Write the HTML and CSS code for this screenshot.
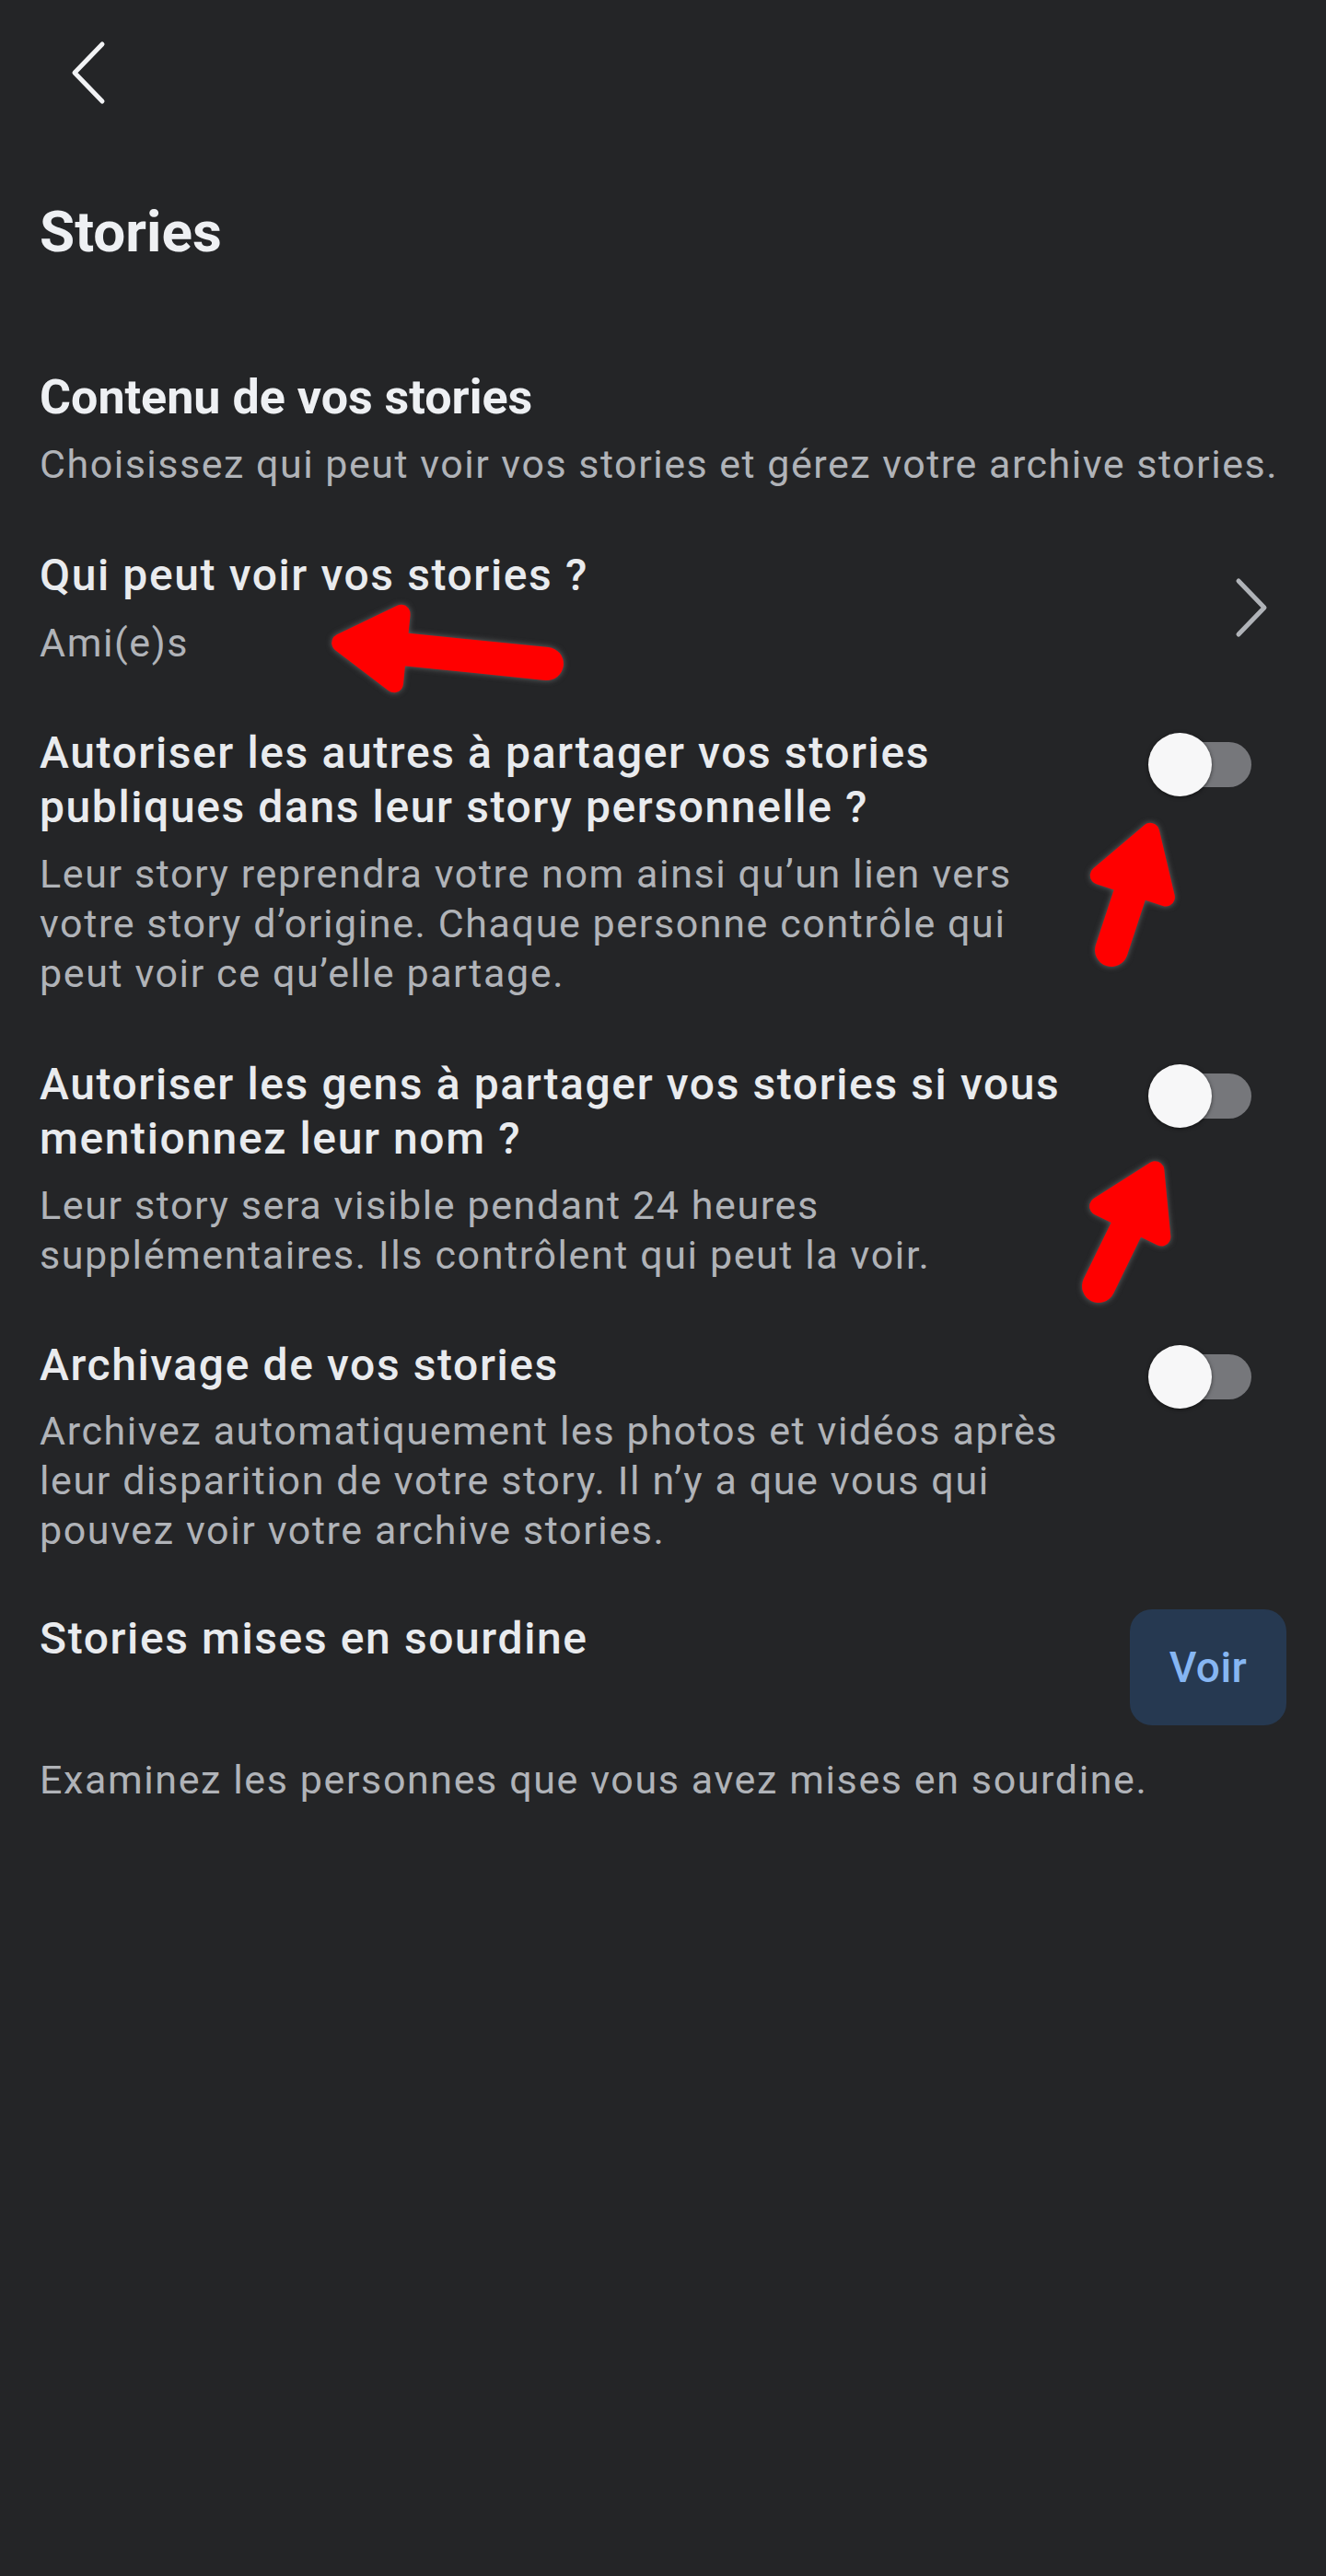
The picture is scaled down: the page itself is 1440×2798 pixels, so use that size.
FILE: index.html
```html
<!DOCTYPE html>
<html lang="fr">
<head>
<meta charset="utf-8">
<title>Stories</title>
<link rel="stylesheet" href="styles.css">
</head>
<body>
<div class="page">
  <header class="topbar">
    <svg class="back" viewBox="0 0 40 70" width="40" height="70" aria-label="Retour"><path d="M35 4 L5 35 L35 66"/></svg>
  </header>

  <h1 class="title">Stories</h1>

  <section class="section">
    <h2 class="section-title">Contenu de vos stories</h2>
    <p class="section-sub">Choisissez qui peut voir vos stories et gérez votre archive stories.</p>
  </section>

  <div class="row row-link">
    <div class="text">
      <div class="item-title">Qui peut voir vos stories ?</div>
      <div class="item-value">Ami(e)s</div>
    </div>
    <svg class="chev" viewBox="0 0 40 66" width="40" height="66"><path d="M6 4 L34 33 L6 62"/></svg>
  </div>

  <div class="row row-toggle row-first">
    <div class="text">
      <div class="item-title">Autoriser les autres à partager vos stories publiques dans leur story personnelle ?</div>
      <div class="item-desc">Leur story reprendra votre nom ainsi qu’un lien vers votre story d’origine. Chaque personne contrôle qui peut voir ce qu’elle partage.</div>
    </div>
    <div class="switch-wrap"><span class="switch"><span class="knob"></span></span></div>
  </div>

  <div class="row row-toggle">
    <div class="text">
      <div class="item-title">Autoriser les gens à partager vos stories si vous mentionnez leur nom ?</div>
      <div class="item-desc">Leur story sera visible pendant 24 heures supplémentaires. Ils contrôlent qui peut la voir.</div>
    </div>
    <div class="switch-wrap"><span class="switch"><span class="knob"></span></span></div>
  </div>

  <div class="row row-toggle row-archive">
    <div class="text">
      <div class="item-title">Archivage de vos stories</div>
      <div class="item-desc item-desc-tight">Archivez automatiquement les photos et vidéos après leur disparition de votre story. Il n’y a que vous qui pouvez voir votre archive stories.</div>
    </div>
    <div class="switch-wrap switch-wrap-archive"><span class="switch"><span class="knob"></span></span></div>
  </div>

  <div class="row row-button">
    <div class="item-title">Stories mises en sourdine</div>
    <button class="btn-voir" type="button">Voir</button>
  </div>
  <p class="muted-desc">Examinez les personnes que vous avez mises en sourdine.</p>
</div>

<svg class="annotations" viewBox="0 0 1440 2798" width="1440" height="2798" aria-hidden="true">
  <g class="arrow" transform="translate(594 721) rotate(-174.2)">
    <line x1="0" y1="0" x2="170" y2="0"/>
    <polygon points="225,0 163,-38 163,38"/>
  </g>
  <g class="arrow" transform="translate(1207 1032) rotate(-71.8)">
    <line x1="0" y1="0" x2="80" y2="0"/>
    <polygon points="135,0 73,-38 73,38"/>
  </g>
  <g class="arrow" transform="translate(1193 1397) rotate(-64)">
    <line x1="0" y1="0" x2="85" y2="0"/>
    <polygon points="140,0 78,-38 78,38"/>
  </g>
</svg>
</body>
</html>
```

FILE: styles.css
```css
html, body {
  margin: 0;
  padding: 0;
  background: #242527;
}

body {
  position: relative;
  width: 1440px;
  min-height: 2798px;
  font-family: Roboto, "Noto Sans", "Liberation Sans", sans-serif;
  color: #e4e6eb;
}

.page {
  padding: 0 43px;
}

.topbar {
  height: 156px;
  box-sizing: border-box;
  padding-top: 44px;
  display: flex;
  align-items: flex-start;
}

.back {
  margin-left: 33px;
  fill: none;
  stroke: #f2f3f5;
  stroke-width: 5;
  stroke-linecap: round;
  stroke-linejoin: round;
}

.title {
  margin: 60px 0 0;
  font-size: 62px;
  line-height: 72px;
  font-weight: 700;
  color: #eef0f3;
}

.section {
  margin-top: 113px;
}

.section-title {
  margin: 0;
  font-size: 52px;
  line-height: 62px;
  font-weight: 700;
  color: #eef0f3;
}

.section-sub {
  margin: 15px 0 0;
  font-size: 43px;
  line-height: 52px;
  letter-spacing: 1.5px;
  color: #b0b3b8;
  white-space: nowrap;
}

.row {
  display: flex;
  align-items: flex-start;
}

.text {
  flex: 1;
  min-width: 0;
}

.item-title {
  font-size: 48px;
  line-height: 59px;
  font-weight: 500;
  letter-spacing: 1.6px;
  color: #e9ebee;
}

.item-value {
  margin-top: 18px;
  font-size: 43px;
  line-height: 52px;
  letter-spacing: 1.6px;
  color: #b0b3b8;
}

.item-desc {
  margin-top: 16px;
  font-size: 43px;
  line-height: 54px;
  letter-spacing: 1.6px;
  color: #b0b3b8;
}

.item-desc-tight {
  margin-top: 15px;
}

.row-link {
  margin-top: 65px;
}

.chev {
  margin-top: 32px;
  margin-right: 18px;
  fill: none;
  stroke: #b0b3b8;
  stroke-width: 5;
  stroke-linecap: round;
  stroke-linejoin: round;
}

.row-toggle {
  margin-top: 64px;
}

.row-archive {
  margin-top: 63px;
}

.switch-wrap {
  width: 224px;
  flex: none;
  display: flex;
  justify-content: flex-end;
  padding-right: 38px;
  box-sizing: border-box;
  padding-top: 8px;
}

.switch-wrap-archive {
  padding-top: 8px;
}

.switch {
  position: relative;
  display: block;
  width: 112px;
  height: 69px;
}

.switch::before {
  content: "";
  position: absolute;
  left: 10px;
  right: 0;
  top: 10px;
  height: 49px;
  border-radius: 25px;
  background: #76777b;
}

.knob {
  position: absolute;
  left: 0;
  top: 0;
  width: 69px;
  height: 69px;
  border-radius: 50%;
  background: #f7f7f8;
  box-shadow: 0 1px 4px rgba(0, 0, 0, 0.55);
}

.row-button {
  margin-top: 61px;
  justify-content: space-between;
}

.btn-voir {
  margin-top: -2px;
  width: 170px;
  height: 126px;
  border: none;
  border-radius: 24px;
  background: #263951;
  color: #86b6f2;
  font-family: Roboto, "Noto Sans", "Liberation Sans", sans-serif;
  font-size: 46px;
  font-weight: 500;
  letter-spacing: 0.5px;
  padding: 0;
}

.muted-desc {
  margin: 32px 0 0;
  font-size: 43px;
  line-height: 54px;
  letter-spacing: 1.6px;
  color: #b0b3b8;
}

.annotations {
  position: absolute;
  left: 0;
  top: 0;
  pointer-events: none;
  filter: drop-shadow(0 0 3px rgba(110, 110, 110, 0.9));
}

.arrow line {
  stroke: #ff0000;
  stroke-width: 36;
  stroke-linecap: round;
}

.arrow polygon {
  fill: #ff0000;
  stroke: #ff0000;
  stroke-width: 20;
  stroke-linejoin: round;
}
```
